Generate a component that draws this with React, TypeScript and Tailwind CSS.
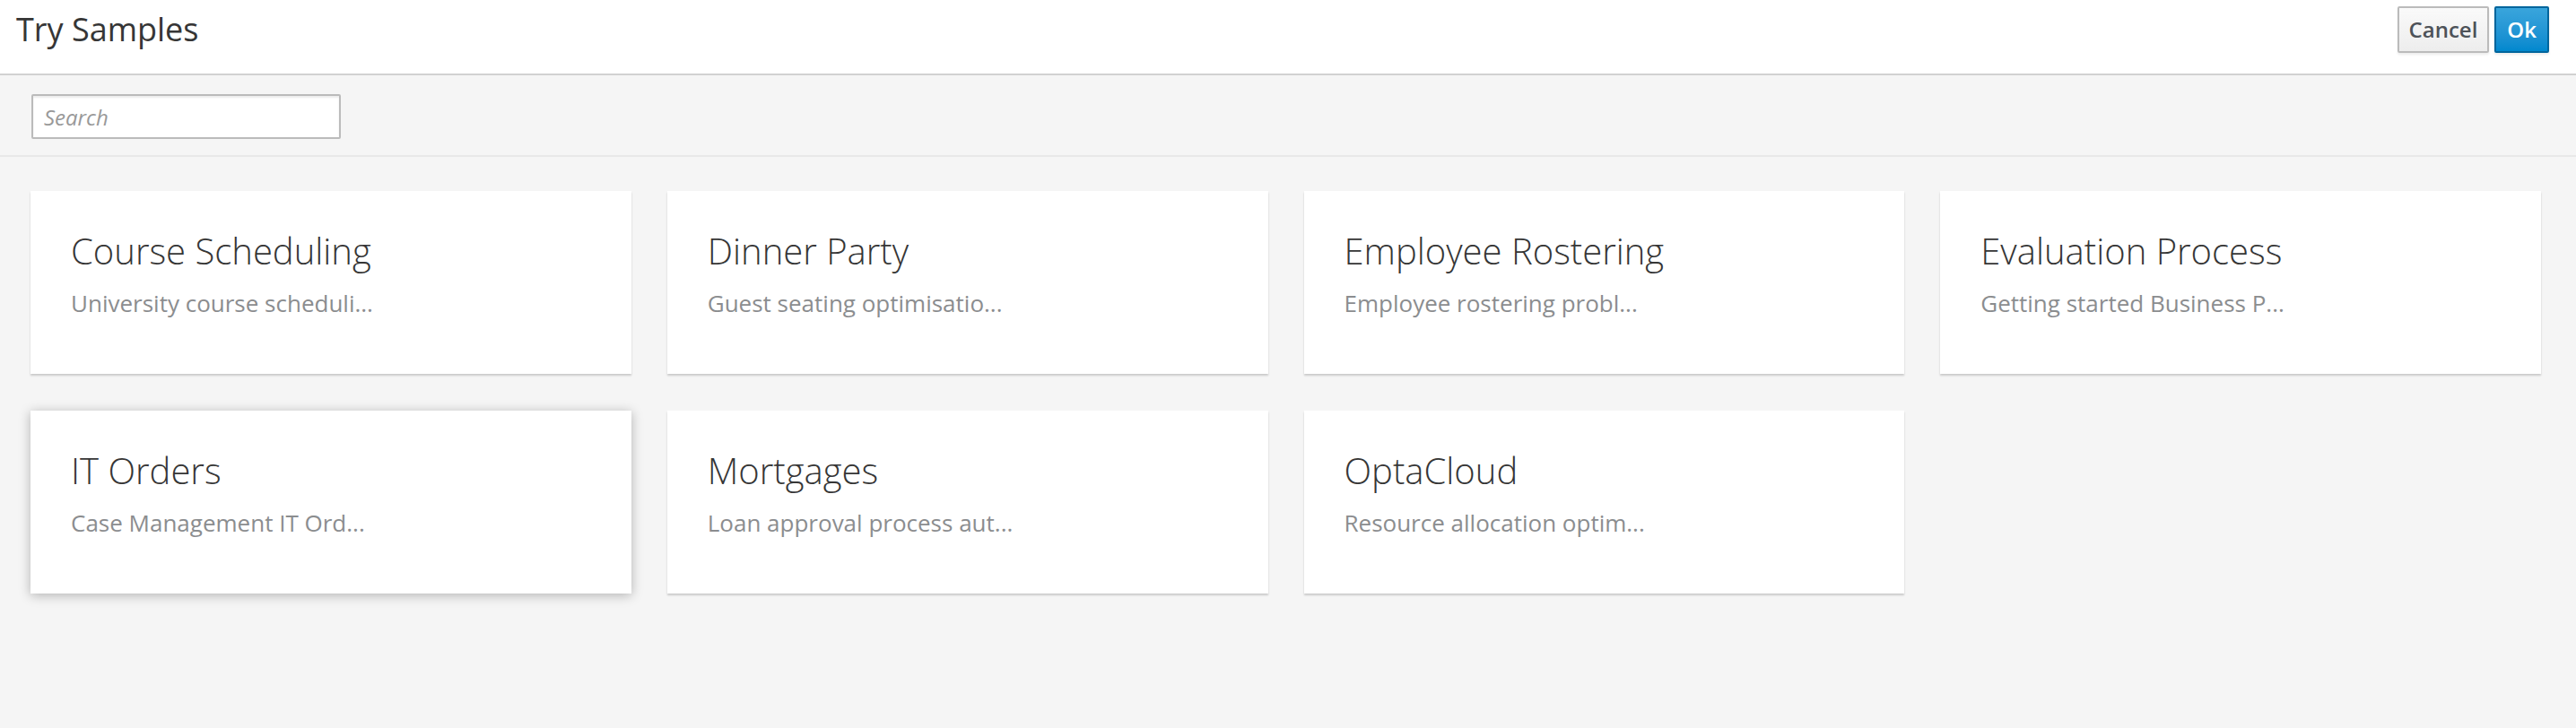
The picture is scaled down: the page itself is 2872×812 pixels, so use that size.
import React from 'react'

/* ─── Sample data ─── */
interface Sample {
  id: number
  title: string
  description: string
  active?: boolean
}

const SAMPLES: Sample[] = [
  { id: 1, title: 'Course Scheduling', description: 'University course scheduli...' },
  { id: 2, title: 'Dinner Party', description: 'Guest seating optimisatio...' },
  { id: 3, title: 'Employee Rostering', description: 'Employee rostering probl...' },
  { id: 4, title: 'Evaluation Process', description: 'Getting started Business P...' },
  { id: 5, title: 'IT Orders', description: 'Case Management IT Ord...', active: true },
  { id: 6, title: 'Mortgages', description: 'Loan approval process aut...' },
  { id: 7, title: 'OptaCloud', description: 'Resource allocation optim...' },
]

const FONT = "font-['Open_Sans','Liberation_Sans',sans-serif]"

/* ─── Card ─── */
function SampleCard({ sample }: { sample: Sample }) {
  return (
    <div
      className={
        'h-[204px] cursor-pointer bg-white pl-[45px] pr-[30px] pt-[45px] ' +
        (sample.active
          ? 'shadow-[0_2px_12px_rgba(3,3,3,0.28)]'
          : 'shadow-[0_2px_2px_rgba(3,3,3,0.175)]')
      }
    >
      <h2 className="text-[40px] font-light leading-[44px] text-[#363636]">{sample.title}</h2>
      <p className="mt-[18px] text-[26px] leading-[36px] text-[#8b8d8f]">{sample.description}</p>
    </div>
  )
}

/* ─── Main ─── */
export default function App() {
  return (
    <div className={`${FONT} min-h-[812px] bg-[#f5f5f5]`}>
      {/* Header */}
      <div className="flex h-[84px] items-start justify-between border-b-2 border-[#d1d1d1] bg-white pl-[18px] pr-[30px]">
        <h1 className="mt-[8px] text-[36px] font-normal leading-[49px] text-[#363636]">Try Samples</h1>
        <div className="mt-[7px] flex gap-[6px]">
          <button className="h-[52px] rounded-[2px] border-2 border-[#bbbbbb] bg-gradient-to-b from-[#fafafa] to-[#ededed] px-[11px] text-[24px] font-semibold text-[#4d5258] shadow-[0_2px_3px_rgba(3,3,3,0.08)]">
            Cancel
          </button>
          <button className="h-[52px] rounded-[2px] border-2 border-[#00659c] bg-gradient-to-b from-[#39a5dc] to-[#0088ce] px-[12px] text-[24px] font-semibold text-white shadow-[0_2px_3px_rgba(3,3,3,0.08)]">
            Ok
          </button>
        </div>
      </div>

      {/* Toolbar */}
      <div className="border-b-2 border-[#e8e8e8] pb-[18px] pl-[35px] pt-[21px]">
        <input
          type="text"
          placeholder="Search"
          className="h-[50px] w-[345px] rounded-[2px] border-2 border-[#bbbbbb] bg-white px-[12px] text-[24px] text-[#363636] shadow-[inset_0_2px_2px_rgba(3,3,3,0.075)] placeholder:italic placeholder:text-[#999999] focus:outline-none"
        />
      </div>

      {/* Cards */}
      <div className="grid grid-cols-4 gap-x-[40px] gap-y-[41px] pb-[40px] pl-[34px] pr-[39px] pt-[38px]">
        {SAMPLES.map((s) => (
          <SampleCard key={s.id} sample={s} />
        ))}
      </div>
    </div>
  )
}
